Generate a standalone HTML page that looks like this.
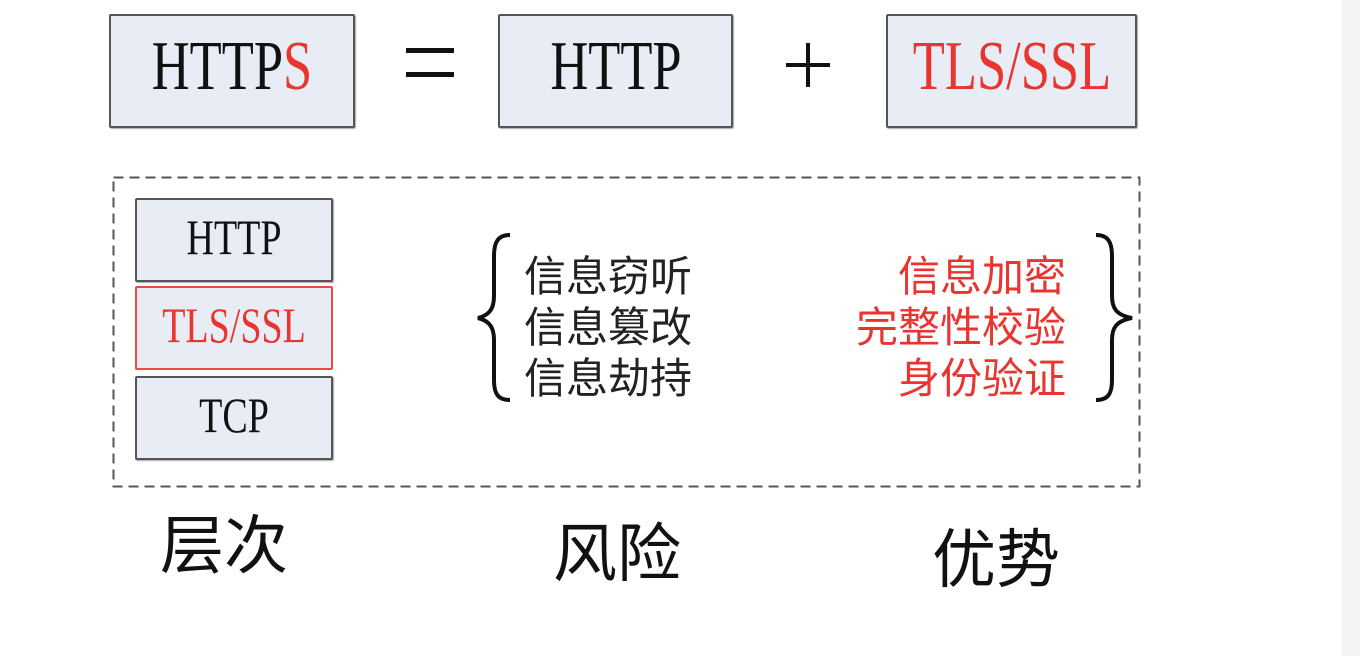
<!DOCTYPE html>
<html><head><meta charset="utf-8"><style>
html,body{margin:0;padding:0;width:1360px;height:656px;background:#fff;overflow:hidden;position:relative}
.a{position:absolute}
.box{position:absolute;background:#e8ecf5;border:2px solid #555;box-sizing:border-box;border-radius:2px;box-shadow:1px 1px 1px #aaa}
.ser{font-family:"Liberation Serif",serif;color:#111;white-space:nowrap;position:absolute;left:50%;top:50%}
.r{color:#e8352f}
.cjk{font-family:"Liberation Sans","Noto Sans CJK SC",sans-serif;position:absolute;white-space:nowrap}
</style></head><body>
<div class="a" style="left:1342px;top:0;width:18px;height:656px;background:#f3f4f4"></div>

<div class="box" style="left:109px;top:14px;width:246px;height:114px"><span class="ser" style="font-size:70px;transform:translate(-50%,-55%) scaleX(0.75)">HTTP<span class="r">S</span></span></div>
<div class="box" style="left:498px;top:14px;width:235px;height:114px"><span class="ser" style="font-size:70px;transform:translate(-50%,-55%) scaleX(0.75)">HTTP</span></div>
<div class="box" style="left:886px;top:14px;width:251px;height:114px"><span class="ser r" style="font-size:70px;transform:translate(-50%,-55%) scaleX(0.75)">TLS/SSL</span></div>
<div class="a" style="left:406px;top:48px;width:48px;height:5px;background:#111"></div>
<div class="a" style="left:406px;top:72px;width:48px;height:5px;background:#111"></div>
<div class="a" style="left:786px;top:63px;width:44px;height:4px;background:#111"></div>
<div class="a" style="left:806px;top:43px;width:4px;height:44px;background:#111"></div>

<svg class="a" style="left:112px;top:176px" width="1030" height="313"><rect x="1.5" y="1.5" width="1026" height="309" fill="none" stroke="#555" stroke-width="2" stroke-dasharray="10 6"/></svg>

<div class="box" style="left:135px;top:198px;width:198px;height:84px"><span class="ser" style="font-size:50px;transform:translate(-50%,-55%) scaleX(0.76)">HTTP</span></div>
<div class="box" style="left:135px;top:286px;width:198px;height:84px;border-color:#ea4a44;box-shadow:none"><span class="ser r" style="font-size:50px;transform:translate(-50%,-55%) scaleX(0.76)">TLS/SSL</span></div>
<div class="box" style="left:135px;top:376px;width:198px;height:84px"><span class="ser" style="font-size:50px;transform:translate(-50%,-55%) scaleX(0.76)">TCP</span></div>

<svg class="a" style="left:470px;top:228px" width="50" height="180" viewBox="0 0 50 180"><path d="M40 7 C28 7 24 14 24 28 L24 68 C24 80 20 87 8 90 C20 93 24 100 24 112 L24 152 C24 166 28 172 40 172" fill="none" stroke="#111" stroke-width="4"/></svg>
<svg class="a" style="left:1088px;top:228px" width="50" height="180" viewBox="0 0 50 180"><path d="M8 7 C20 7 24 14 24 28 L24 68 C24 80 28 87 44 90 C28 93 24 100 24 112 L24 152 C24 166 20 172 8 172" fill="none" stroke="#111" stroke-width="4"/></svg>

<div class="cjk" style="left:524px;top:251px;font-size:42px;line-height:51px;color:#222">信息窃听<br>信息篡改<br>信息劫持</div>
<div class="cjk r" style="right:294px;top:251px;font-size:42px;line-height:51px;text-align:right">信息加密<br>完整性校验<br>身份验证</div>

<div class="cjk" style="left:160px;top:509px;font-size:64px;line-height:74px;color:#111">层次</div>
<div class="cjk" style="left:553px;top:517px;font-size:64px;line-height:74px;color:#111">风险</div>
<div class="cjk" style="left:932px;top:523px;font-size:64px;line-height:74px;color:#111">优势</div>
</body></html>
